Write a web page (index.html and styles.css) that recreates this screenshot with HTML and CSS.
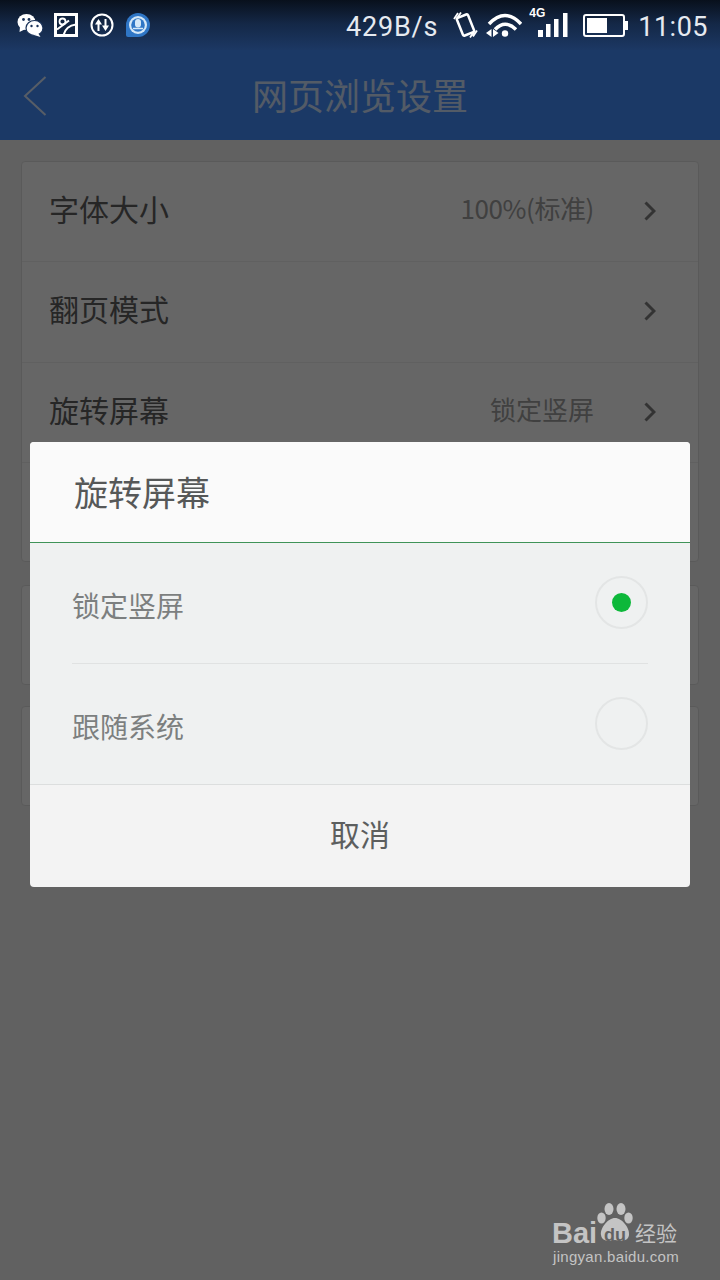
FILE: index.html
```html
<!DOCTYPE html>
<html lang="zh-CN">
<head>
<meta charset="utf-8">
<title>网页浏览设置</title>
<link rel="stylesheet" href="styles.css">
</head>
<body>
<div class="screen">
  <header class="appbar">
    <div class="statusbar-space"></div>
    <div class="titlebar">
      <svg class="back" width="24" height="40" viewBox="0 0 24 40"><path d="M22.500 1 L2 20 L22.500 39" fill="none" stroke="#fff" stroke-width="2"/></svg>
      <h1 class="title">网页浏览设置</h1>
    </div>
  </header>

  <main class="settings">
    <section class="card first">
      <div class="row"><span class="label">字体大小</span><span class="value narrow">100%(标准)</span><svg class="chev" width="12" height="20" viewBox="0 0 12 20"><path d="M1.500 1.500L10 10L1.500 18.500" fill="none" stroke="#808080" stroke-width="3"/></svg></div>
      <div class="row tall"><span class="label">翻页模式</span><svg class="chev" width="12" height="20" viewBox="0 0 12 20"><path d="M1.500 1.500L10 10L1.500 18.500" fill="none" stroke="#808080" stroke-width="3"/></svg></div>
      <div class="row"><span class="label">旋转屏幕</span><span class="value">锁定竖屏</span><svg class="chev" width="12" height="20" viewBox="0 0 12 20"><path d="M1.500 1.500L10 10L1.500 18.500" fill="none" stroke="#808080" stroke-width="3"/></svg></div>
      <div class="row short"></div>
    </section>
    <section class="card"><div class="row short"></div></section>
    <section class="card"><div class="row short"></div></section>
  </main>

  <div class="scrim"></div>

  <div class="statusbar">
    <div class="status-left">
      <svg class="ic-chat" width="26" height="24" viewBox="0 0 26 24"><ellipse cx="9.500" cy="9" rx="9" ry="8" fill="#fff"/><path d="M3 14l-.5 5 6-3z" fill="#fff"/><ellipse cx="17.500" cy="15" rx="8.500" ry="7.500" fill="#fff" stroke="#1a3258" stroke-width="1.200"/><path d="M21 20l2.500 4-6.500-2z" fill="#fff"/><circle cx="6.500" cy="6.500" r="1.400" fill="#1a3258"/><circle cx="12" cy="6.500" r="1.400" fill="#1a3258"/><circle cx="14.500" cy="13" r="1.200" fill="#1a3258"/><circle cx="20.500" cy="13" r="1.200" fill="#1a3258"/></svg>
      <svg width="24" height="24" viewBox="0 0 24 24"><rect x="1.500" y="1.500" width="21" height="21" fill="#10233f" stroke="#fff" stroke-width="3"/><circle cx="8.500" cy="8.500" r="3" fill="none" stroke="#fff" stroke-width="1.800"/><path d="M3 16.500L15 7.500M9.500 22C11 16 15 12.500 22 11.500" fill="none" stroke="#fff" stroke-width="2"/></svg>
      <svg width="24" height="24" viewBox="0 0 24 24"><circle cx="12" cy="12" r="10.500" fill="none" stroke="#fff" stroke-width="2"/><path d="M8.500 18V11M15.500 6V13" stroke="#fff" stroke-width="2"/><path d="M8.500 6L5 11.500H12zM15.500 18L12 12.500H19z" fill="#fff"/></svg>
      <svg width="24" height="24" viewBox="0 0 24 24"><path d="M12 0A12 12 0 0 1 12 24H2Q0 24 0 22V12A12 12 0 0 1 12 0Z" fill="#2f76c6"/><circle cx="12" cy="12" r="9" fill="#d5e8f8"/><circle cx="12" cy="12" r="6.800" fill="#2f76c6"/><rect x="9" y="6" width="6" height="8.500" rx="3" fill="#d5e8f8"/><path d="M7 15.500h10" stroke="#d5e8f8" stroke-width="1.500"/></svg>
    </div>
    <div class="status-right">
      <span class="speed">429B/s</span>
      <svg class="ic-vibrate" width="25" height="26" viewBox="0 0 25 26"><rect x="6.500" y="3.500" width="12" height="19" rx="1.500" transform="rotate(-22 12.500 13)" fill="none" stroke="#fff" stroke-width="2.500"/><path d="M5 1L1 7M8 0.500L4.500 5.500M20.500 20.500L17 25.500M24 18.500L20 24.500" stroke="#fff" stroke-width="1.800"/></svg>
      <svg class="ic-wifi" width="36" height="24" viewBox="0 0 36 24"><path d="M3 11Q19 -6 35 11M9 16.500Q19 6 30 16.500" fill="none" stroke="#fff" stroke-width="3.500"/><circle cx="19" cy="20.500" r="3.200" fill="#fff"/><path d="M0 20L5.500 16V24zM7 16V24L12.500 20z" fill="#fff"/></svg>
      <div class="signal">
        <span class="net">4G</span>
        <svg class="bars" width="30" height="24" viewBox="0 0 30 24"><path d="M0 17h5v7H0zM8 11h4.500v13H8zM16 6h4.500v18H16zM25 0h4.500v24H25z" fill="#fff"/></svg>
      </div>
      <svg class="ic-batt" width="45" height="23" viewBox="0 0 45 23"><rect x="1" y="1" width="40" height="21" rx="2" fill="none" stroke="#fff" stroke-width="2"/><rect x="4" y="4" width="20" height="15" fill="#fff"/><rect x="42" y="7" width="3" height="9" fill="#fff"/></svg>
      <span class="clock">11:05</span>
    </div>
  </div>

  <div class="dialog">
    <div class="dialog-title">旋转屏幕</div>
    <div class="options">
      <div class="option"><span class="option-text">锁定竖屏</span><span class="radio on"></span></div>
      <div class="option"><span class="option-text">跟随系统</span><span class="radio"></span></div>
    </div>
    <div class="cancel">取消</div>
  </div>

  <div class="mark">
    <span class="mark-bai">Bai</span>
    <svg class="mark-paw" width="36" height="40" viewBox="0 0 36 40"><ellipse cx="12" cy="6" rx="4.500" ry="6" fill="#c4c4c4"/><ellipse cx="24" cy="6" rx="4.500" ry="6" fill="#c4c4c4"/><ellipse cx="4.500" cy="15" rx="4.200" ry="5.500" fill="#c4c4c4"/><ellipse cx="31.500" cy="15" rx="4.200" ry="5.500" fill="#c4c4c4"/><path d="M18 15C11 15 3 25 4 32C5 39 12 38 18 37C24 38 31 39 32 32C33 25 25 15 18 15Z" fill="#c4c4c4"/></svg>
    <span class="mark-du">du</span>
    <span class="mark-cn">经验</span>
    <div class="mark-url">jingyan.baidu.com</div>
  </div>
</div>
</body>
</html>
```
FILE: styles.css
```css
* { box-sizing: border-box; margin: 0; padding: 0; }

html, body { width: 720px; height: 1280px; overflow: hidden; }

body {
  font-family: "Noto Sans CJK SC", "Noto Sans", sans-serif;
  background: #f2f2f2;
}

.screen {
  position: relative;
  width: 720px;
  height: 1280px;
  overflow: hidden;
}

/* Page underneath the dialog */
.appbar {
  height: 140px;
  background: #4590ff;
}

.statusbar-space { height: 48px; }

.titlebar {
  position: relative;
  height: 92px;
  display: flex;
  align-items: center;
  justify-content: center;
}

.back {
  position: absolute;
  left: 23px;
  top: 28px;
  opacity: .8;
}

.title {
  font-size: 36px;
  font-weight: 400;
  line-height: 96px;
  color: #fff;
  opacity: .75;
}

.settings {
  padding: 21px 21px 0;
  display: flex;
  flex-direction: column;
  gap: 21px;
}

.card {
  background: #fff;
  border: 1px solid #e2e2e2;
  border-radius: 4px;
}

.card.first { margin-bottom: 2px; }

.row {
  height: 100px;
  display: flex;
  align-items: center;
  padding: 0 42px 8px 27px;
  border-bottom: 1px solid #efefef;
}

.row.tall { height: 101px; }

.row.short {
  height: 98px;
  border-bottom: 0;
}

.label {
  flex: 1;
  font-size: 30px;
  color: #606060;
}

.value {
  font-size: 26px;
  color: #a0a0a0;
  margin-right: 50px;
}

.value.narrow { letter-spacing: -.4px; }

.chev { margin-top: 6px; }

.scrim {
  position: absolute;
  inset: 0;
  background: rgba(0, 0, 0, .6);
}

/* Status bar sits above the scrim */
.statusbar {
  position: absolute;
  top: 0;
  left: 0;
  width: 720px;
  height: 50px;
  padding: 0 12px 0 17px;
  display: flex;
  align-items: center;
  justify-content: space-between;
  background: linear-gradient(#08101c 0, #142847 24px, #1c3864 50px);
}

.status-left {
  display: flex;
  align-items: center;
  gap: 12px;
}

.ic-chat { margin-right: -1px; }

.status-right {
  display: flex;
  align-items: center;
}

.speed, .clock {
  font-family: Roboto, sans-serif;
  font-size: 27px;
  padding-top: 4px;
  color: #e6eaf0;
  letter-spacing: .5px;
}

.speed { letter-spacing: .8px; }

.ic-vibrate { margin-left: 15px; }
.ic-wifi { margin-left: 8px; }
.ic-batt { margin-left: 15px; }
.clock { margin-left: 10px; }

.signal {
  position: relative;
  margin-left: 16px;
  width: 30px;
  height: 24px;
}

.bars { display: block; }

.net {
  position: absolute;
  left: -9px;
  top: -7px;
  font-family: "Liberation Sans", sans-serif;
  font-size: 12px;
  line-height: 14px;
  font-weight: 700;
  color: #fff;
}

/* Rotation dialog */
.dialog {
  position: absolute;
  left: 30px;
  top: 442px;
  width: 660px;
  height: 445px;
  border-radius: 4px;
  overflow: hidden;
  background: #f3f3f3;
}

.dialog-title {
  height: 101px;
  padding-left: 44px;
  font-size: 34px;
  line-height: 100px;
  color: #565858;
  background: #fafafa;
  border-bottom: 1px solid #3f9358;
}

.options {
  padding: 0 42px;
  background: #eff1f1;
  border-bottom: 1px solid #dcdede;
}

.option {
  height: 121px;
  display: flex;
  align-items: center;
  justify-content: space-between;
  padding-bottom: 2px;
  font-size: 28px;
  color: #7c7f7f;
  border-bottom: 1px solid #e0e2e2;
}

.option:last-child {
  height: 120px;
  border-bottom: 0;
}

.option-text { padding-top: 6px; }

.radio {
  width: 53px;
  height: 53px;
  border: 2px solid #e3e5e5;
  border-radius: 50%;
  display: flex;
  align-items: center;
  justify-content: center;
}

.radio.on::after {
  content: "";
  width: 19px;
  height: 19px;
  border-radius: 50%;
  background: #0db83a;
}

.cancel {
  height: 102px;
  padding-bottom: 6px;
  display: flex;
  align-items: center;
  justify-content: center;
  font-size: 30px;
  color: #5c5e5e;
}

/* Corner watermark */
.mark {
  position: absolute;
  left: 552px;
  top: 1203px;
  width: 130px;
  height: 62px;
  color: #c4c4c4;
}

.mark-bai {
  position: absolute;
  left: 0;
  top: 12px;
  font-family: "Liberation Sans", sans-serif;
  font-weight: 700;
  font-size: 29px;
  line-height: 36px;
}

.mark-paw {
  position: absolute;
  left: 45px;
  top: 0;
}

.mark-du {
  position: absolute;
  left: 52px;
  top: 23px;
  font-family: "Liberation Sans", sans-serif;
  font-weight: 700;
  font-size: 18px;
  line-height: 18px;
  color: #626262;
}

.mark-cn {
  position: absolute;
  left: 83px;
  top: 14px;
  font-size: 21px;
  line-height: 30px;
  white-space: nowrap;
}

.mark-url {
  position: absolute;
  left: 1px;
  top: 44px;
  font-family: "Liberation Sans", sans-serif;
  font-size: 15px;
  line-height: 20px;
  letter-spacing: .3px;
  white-space: nowrap;
}
```
